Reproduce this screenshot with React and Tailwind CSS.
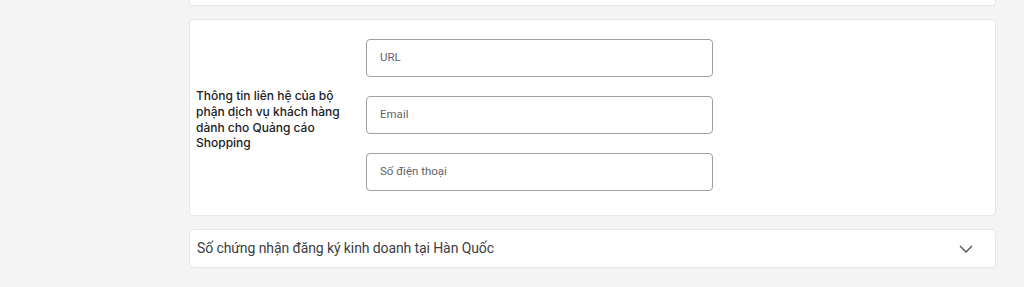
export default function App() {
  const inputs = ["URL", "Email", "Số điện thoại"];
  return (
    <div className="w-[1024px] h-[287px] overflow-hidden bg-[#f4f4f4] pl-[189px] pr-[28px]" style={{ fontFamily: "Roboto, 'Noto Sans', sans-serif" }}>
      <div className="h-[6px] bg-white rounded-b-[4px] border-x border-b border-[#e6e6e6]" />
      <div className="mt-[13px] bg-white rounded-[4px] border border-[#e6e6e6] flex items-center pl-[6px] pt-[19px] pb-[24px]">
        <div className="w-[152px] mr-[18px] pt-[9px] text-[12px] leading-[15.7px] text-[#202124] font-medium" style={{ fontFamily: "Inter, 'Noto Sans', sans-serif" }}>
          Thông tin liên hệ của bộ phận dịch vụ khách hàng dành cho Quảng cáo Shopping
        </div>
        <div className="flex flex-col gap-[19px]">
          {inputs.map((p) => (
            <div key={p} className="w-[347px] h-[38px] border border-[#a0a0a0] rounded-[4px] flex items-center pl-[13px] text-[11.5px] text-[#5f6368]">
              {p}
            </div>
          ))}
        </div>
      </div>
      <div className="mt-[13px] h-[39px] bg-white rounded-[4px] border border-[#e6e6e6] flex items-center justify-between pl-[7px] pr-[22px]">
        <span className="text-[14px] text-[#3c4043] tracking-[-0.1px]">Số chứng nhận đăng ký kinh doanh tại Hàn Quốc</span>
        <svg width="14" height="8" viewBox="0 0 14 8" fill="none">
          <path d="M1 1l6 6 6-6" stroke="#5f6368" strokeWidth="1.6" />
        </svg>
      </div>
    </div>
  );
}
